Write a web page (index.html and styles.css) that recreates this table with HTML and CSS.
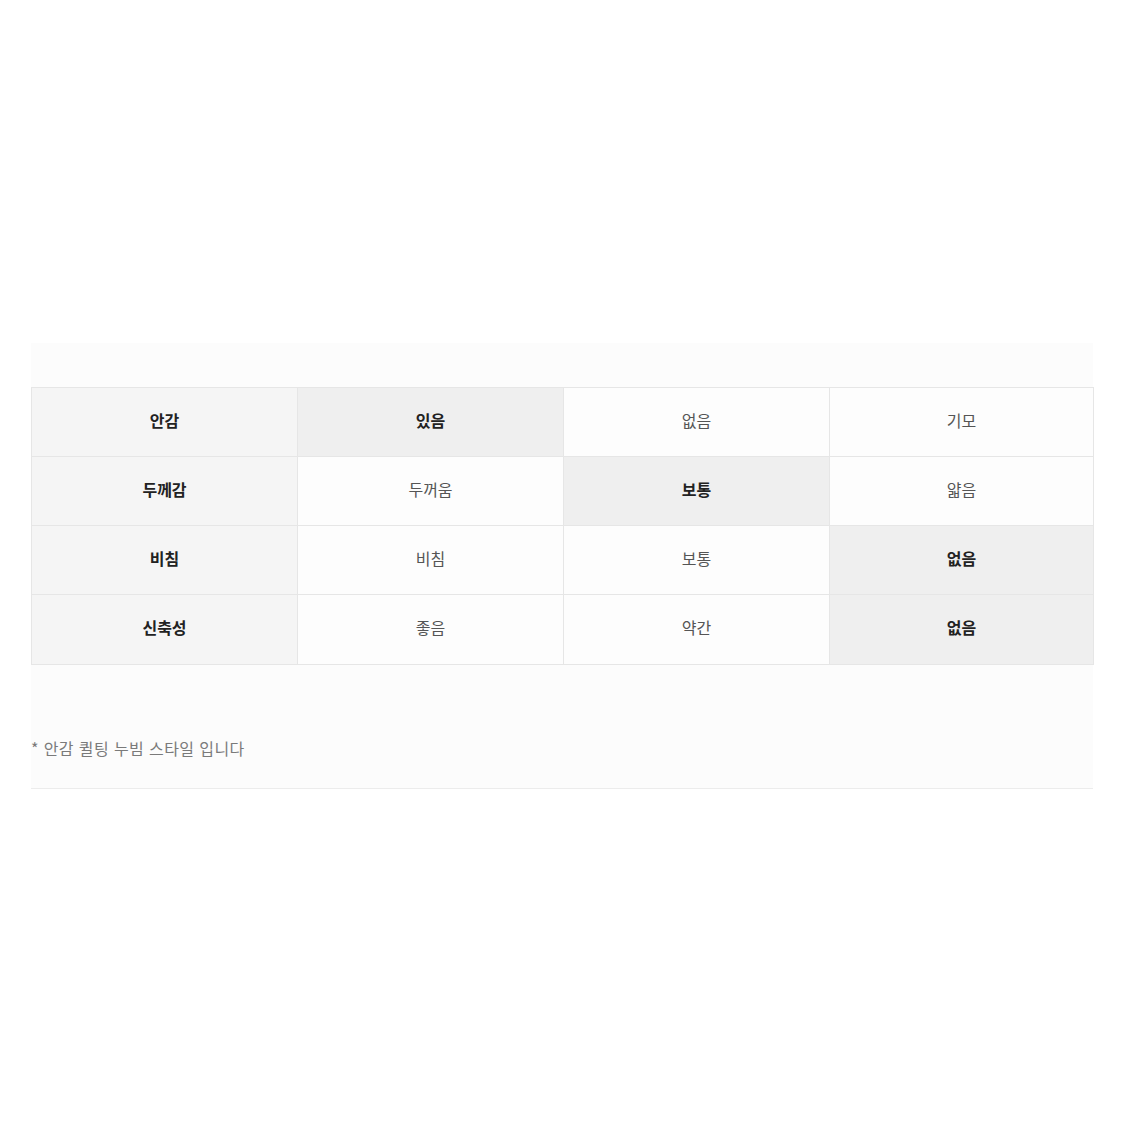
FILE: index.html
```html
<!DOCTYPE html>
<html lang="ko">
<head>
<meta charset="utf-8">
<link rel="stylesheet" href="styles.css">
</head>
<body>
<div class="wrap">
  <div class="panel">
    <table class="spec">
      <colgroup>
        <col class="c-wide">
        <col class="c-wide">
        <col class="c-wide">
        <col class="c-last">
      </colgroup>
      <tr>
        <th>안감</th>
        <td class="on">있음</td>
        <td>없음</td>
        <td>기모</td>
      </tr>
      <tr>
        <th>두께감</th>
        <td>두꺼움</td>
        <td class="on">보통</td>
        <td>얇음</td>
      </tr>
      <tr>
        <th>비침</th>
        <td>비침</td>
        <td>보통</td>
        <td class="on">없음</td>
      </tr>
      <tr>
        <th>신축성</th>
        <td>좋음</td>
        <td>약간</td>
        <td class="on">없음</td>
      </tr>
    </table>
    <p class="note">* 안감 퀼팅 누빔 스타일 입니다</p>
  </div>
</div>
</body>
</html>
```

FILE: styles.css
```css
html, body {
  margin: 0;
  padding: 0;
  background: #ffffff;
}
body {
  font-family: "Noto Sans CJK KR", "Noto Sans", sans-serif;
}
.wrap {
  padding-top: 343px;
  padding-left: 31px;
  width: 1062px;
}
.panel {
  background: #fcfcfc;
  padding-top: 44px;
  padding-bottom: 28px;
  border-bottom: 1px solid #ececec;
}
.spec {
  width: 1062px;
  border-collapse: collapse;
  table-layout: fixed;
}
.c-wide {
  width: 266px;
}
.c-last {
  width: 264px;
}
.spec th, .spec td {
  height: 63px;
  border: 1px solid #e6e6e6;
  text-align: center;
  vertical-align: middle;
  font-size: 16px;
  line-height: 20px;
  padding: 0 0 5px 0;
}
.spec tr:last-child th, .spec tr:last-child td {
  height: 64px;
}
.spec th {
  background: #f5f5f5;
  color: #222;
  font-weight: 700;
}
.spec td {
  background: #fdfdfd;
  color: #555;
  font-weight: 400;
}
.spec td.on {
  background: #efefef;
  color: #222;
  font-weight: 700;
}
.note {
  margin: 71px 0 0 0;
  font-size: 16px;
  letter-spacing: 0.4px;
  color: #7a7a7a;
  line-height: 24px;
}
```
